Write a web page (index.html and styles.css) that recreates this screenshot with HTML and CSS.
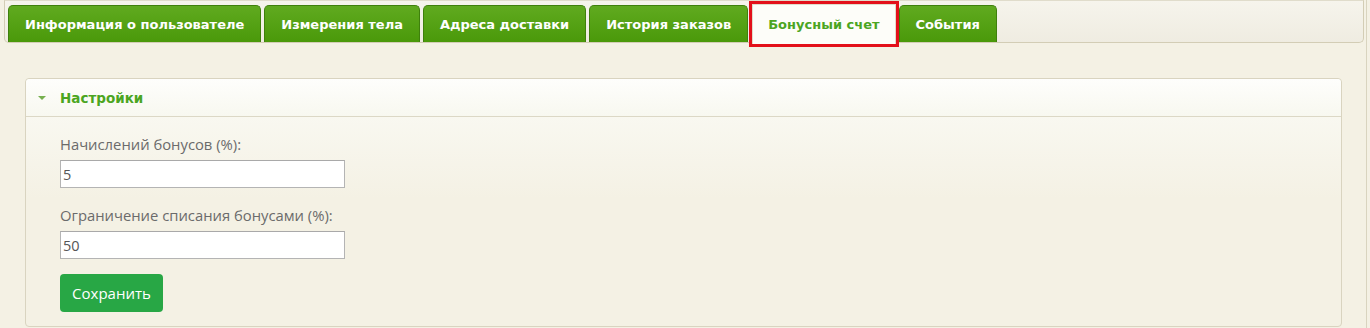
FILE: index.html
```html
<!DOCTYPE html>
<html lang="ru">
<head>
  <meta charset="UTF-8" />
  <title>Бонусный счет</title>
  <link rel="stylesheet" href="styles.css">
</head>
<body>

  <div class="tabs-widget">
    <ul class="tabs-nav">
      <li class="tab">Информация о пользователе</li>
      <li class="tab">Измерения тела</li>
      <li class="tab">Адреса доставки</li>
      <li class="tab">История заказов</li>
      <li class="tab active">Бонусный счет</li>
      <li class="tab">События</li>
    </ul>

    <div class="tab-panel">
      <!-- Settings block -->
      <div class="box">
        <div class="box-header">
          <span class="arrow"></span>
          <span class="box-title">Настройки</span>
        </div>
        <div class="box-body">
          <label class="field-label">Начислений бонусов (%):</label>
          <input class="field" type="text" value="5">
          <label class="field-label second">Ограничение списания бонусами (%):</label>
          <input class="field" type="text" value="50">
          <button class="btn-save">Сохранить</button>
        </div>
      </div>
    </div>
  </div>

</body>
</html>
```

FILE: styles.css
```css
* { box-sizing: border-box; margin: 0; padding: 0; }
body { background: #f4f1e4; font-family: "Open Sans", Arial, sans-serif; }

/* ===== Tabs ===== */
.tabs-widget {
  width: 1367px;
  height: 340px;
  padding: 0 2px 0 4px;
  border-right: 1px solid #d9d4bf;
}
.tabs-nav {
  display: flex;
  list-style: none;
  height: 43px;
  padding: 4px 0 0 3px;
  border: 1px solid #d3cdb5;
  border-top-color: #e0dccb;
  border-radius: 0 0 5px 5px;
  background: linear-gradient(#f6f4ec, #efece1);
}
.tab {
  height: 37px;
  margin-right: 3px;
  padding: 0 16px;
  display: flex;
  align-items: center;
  font-family: "DejaVu Sans", Verdana, sans-serif;
  font-weight: bold;
  font-size: 13px;
  color: #fff;
  background: linear-gradient(#60aa1f, #4a990a);
  border: 1px solid #3f800c;
  border-bottom: none;
  border-radius: 5px 5px 0 0;
  cursor: pointer;
}
.tab.active {
  color: #4ba521;
  background: #fdfdf9;
  border-color: #e0dccb;
  border-radius: 0;
  outline: 3px solid #e3101a;
  height: 40px;
  margin-top: -1px;
  margin-left: 1px;
  padding: 0 15px;
}

/* ===== Panel ===== */
.tab-panel { padding: 35px 22px 0 21px; }
.box {
  border: 1px solid #d9d4c0;
  border-radius: 4px;
  background: linear-gradient(#fbfbf6, #f4f1e4 120px);
}
.box-header {
  height: 38px;
  display: flex;
  align-items: center;
  padding-left: 12px;
  border-bottom: 1px solid #dcd8c6;
  border-radius: 4px 4px 0 0;
  background: linear-gradient(#fefefc, #f8f8f0);
}
.arrow {
  width: 0;
  height: 0;
  border-left: 4px solid transparent;
  border-right: 4px solid transparent;
  border-top: 4px solid #77b04f;
  margin-right: 14px;
}
.box-title {
  font-family: "DejaVu Sans", Verdana, sans-serif;
  font-weight: bold;
  font-size: 13.5px;
  color: #4ba521;
}
.box-body {
  display: flex;
  flex-direction: column;
  align-items: flex-start;
  padding: 17px 0 14px 34px;
}
.field-label {
  font-size: 14.8px;
  line-height: 20px;
  color: #6b6b6b;
  margin-bottom: 6px;
}
.field-label.second { margin-top: 17px; }
.field {
  width: 285px;
  height: 28px;
  padding: 0 2px;
  border: 1px solid #b4b4b4;
  border-top-color: #a9a9a9;
  background: #fff;
  font-family: "Open Sans", Arial, sans-serif;
  font-size: 14.5px;
  color: #555;
  outline: none;
}
.btn-save {
  margin-top: 15px;
  width: 103px;
  height: 38px;
  border: none;
  border-radius: 4px;
  background: #28a745;
  color: #fff;
  font-family: "Open Sans", Arial, sans-serif;
  font-size: 15px;
  cursor: pointer;
}
```
